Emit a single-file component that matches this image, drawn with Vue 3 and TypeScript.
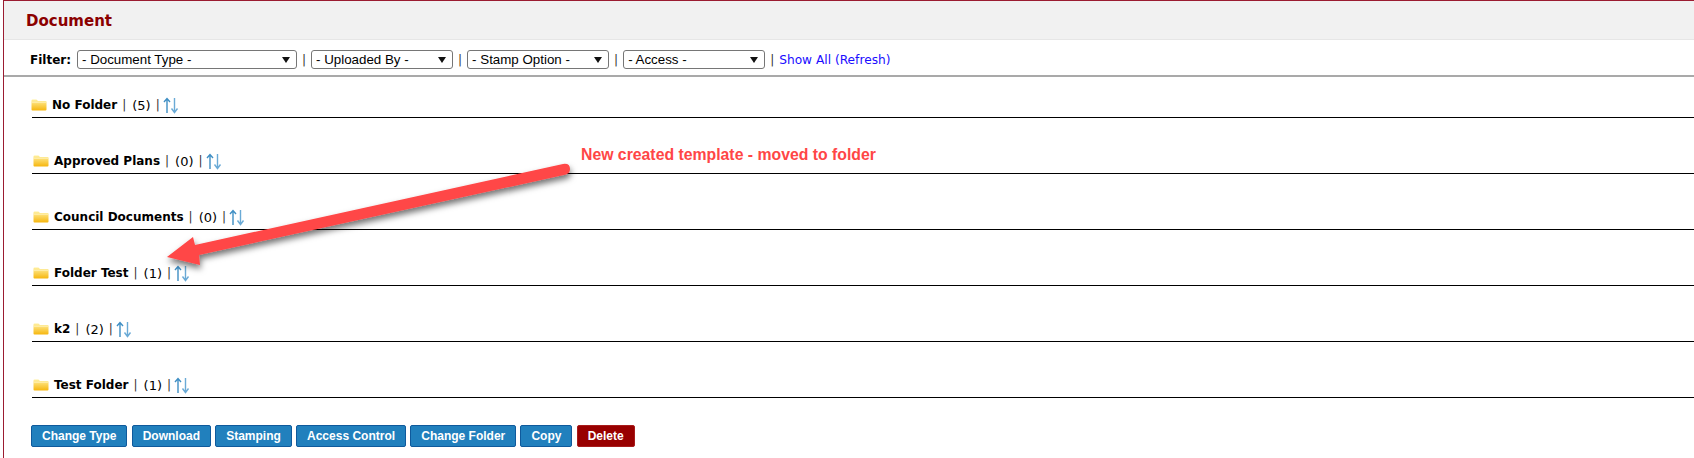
<script setup lang="ts">
const filters = [
  { label: '- Document Type -', cls: 'w-type' },
  { label: '- Uploaded By -', cls: 'w-user' },
  { label: '- Stamp Option -', cls: 'w-stamp' },
  { label: '- Access -', cls: 'w-access' },
]

const folders = [
  { name: 'No Folder', count: 5, first: true },
  { name: 'Approved Plans', count: 0 },
  { name: 'Council Documents', count: 0 },
  { name: 'Folder Test', count: 1 },
  { name: 'k2', count: 2 },
  { name: 'Test Folder', count: 1 },
]

const actions = ['Change Type', 'Download', 'Stamping', 'Access Control', 'Change Folder', 'Copy']
</script>

<template>
  <div class="page">
    <div class="head">Document</div>

    <div class="filter">
      <b class="filter-label">Filter:</b>
      <template v-for="f in filters" :key="f.label">
        <select :class="f.cls">
          <option>{{ f.label }}</option>
        </select>
        <span class="pipe">|</span>
      </template>
      <a class="show-all">Show All (Refresh)</a>
    </div>

    <div class="folders">
      <div v-for="f in folders" :key="f.name" class="folder" :class="{ first: f.first }">
        <svg class="folder-icon" width="16" height="12" viewBox="0 0 16 12">
          <defs>
            <linearGradient id="fold" x1="0" y1="0" x2="0" y2="1">
              <stop offset="0" stop-color="#fff0a0" />
              <stop offset="1" stop-color="#f6b60e" />
            </linearGradient>
          </defs>
          <path d="M0.5 1.5 Q0.5 0.5 1.5 0.5 H5.5 L7 2 H14.5 Q15.5 2 15.5 3 V10.5 Q15.5 11.5 14.5 11.5 H1.5 Q0.5 11.5 0.5 10.5 Z" fill="url(#fold)" />
          <path d="M0.5 3.2 H15.5" stroke="#fff1b8" stroke-width="1" />
        </svg>
        <b class="folder-name">{{ f.name }}</b>
        <span class="pipe">|</span>
        <span class="count">({{ f.count }})</span>
        <span class="pipe tight">|</span>
        <svg class="sort" width="16" height="17" viewBox="0 0 16 17">
          <path d="M4 16 V2 M1 5 L4 1.5 L7 5" fill="none" stroke="#3f8fc4" stroke-width="1.4" />
          <path d="M11.5 1 V15 M8.5 11.5 L11.5 15.5 L14.5 11.5" fill="none" stroke="#6aaad6" stroke-width="1.4" />
        </svg>
      </div>
    </div>

    <div class="actions">
      <button v-for="a in actions" :key="a" class="btn">{{ a }}</button>
      <button class="btn danger">Delete</button>
    </div>

    <svg class="note-arrow" width="1694" height="458" viewBox="0 0 1694 458">
      <defs>
        <filter id="shade" x="-10%" y="-30%" width="120%" height="170%">
          <feDropShadow dx="1" dy="4" stdDeviation="3" flood-color="#000" flood-opacity="0.55" />
        </filter>
      </defs>
      <path
        d="M563 164 Q570 163 570 169 Q570 173 566 174.5 L199 255 L200 265 L167 257 L193 237 L195 245 Z"
        fill="#ff4646"
        filter="url(#shade)"
      />
    </svg>
    <div class="note">New created template - moved to folder</div>
  </div>
</template>

<style>
html,
body {
  margin: 0;
  background: #fff;
}
</style>

<style scoped>
.page {
  position: relative;
  width: 1691px;
  height: 458px;
  margin-left: 3px;
  box-sizing: border-box;
  border-top: 1px solid #9b1c31;
  border-left: 1px solid #9b1c31;
  font-family: "DejaVu Sans", Verdana, sans-serif;
  font-size: 12px;
  color: #000;
  overflow: hidden;
}

.head {
  height: 38px;
  line-height: 40px;
  padding-left: 22px;
  background: #f1f1f1;
  border-bottom: 1px solid #e6e6e6;
  color: #8b0000;
  font-size: 15px;
  font-weight: 700;
}

.filter {
  display: flex;
  align-items: center;
  height: 31px;
  padding: 4px 0 0 26px;
  border-bottom: 2px solid #a9a9a9;
}

.filter-label {
  margin-right: 6px;
}

select {
  height: 19px;
  box-sizing: border-box;
  padding: 0 0 0 4px;
  border: 1px solid #767676;
  border-radius: 3px;
  appearance: none;
  background: #fff url("data:image/svg+xml,%3Csvg xmlns='http://www.w3.org/2000/svg' width='8' height='6'%3E%3Cpath d='M0 0H8L4 6Z' fill='%23111'/%3E%3C/svg%3E") no-repeat right 6px center;
  font-family: "Liberation Sans", Arial, sans-serif;
  font-size: 13.33px;
  color: #000;
}

.w-type { width: 220px; }
.w-user { width: 142px; }
.w-stamp { width: 142px; }
.w-access { width: 142px; }

.pipe {
  margin: 0 5px;
  color: #333;
}

.pipe.tight {
  margin: 0 1px 0 5px;
}

.show-all {
  color: #1a0dff;
  font-size: 12.2px;
}

.folders {
  padding-left: 28px;
}

.folder {
  display: flex;
  align-items: center;
  height: 24px;
  padding-top: 31px;
  border-bottom: 1px solid #000;
}

.folder.first {
  padding-top: 16px;
}

.folder-icon {
  margin: 0 5px 0 1px;
  flex: none;
}

.folder.first .folder-icon {
  margin-left: -1px;
}

.count {
  margin-left: 1px;
  font-size: 13px;
}

.sort {
  margin-left: 2px;
  flex: none;
}

.actions {
  display: flex;
  gap: 4.2px;
  padding: 27px 0 0 27px;
}

.btn {
  height: 22px;
  padding: 0 10px;
  border: 1px solid #0f5a9c;
  border-radius: 2px;
  background: #2180bd;
  color: #fff;
  font-family: "Liberation Sans", Arial, sans-serif;
  font-size: 12px;
  font-weight: 700;
}

.btn.danger {
  background: #980000;
  border-color: #a81c1c;
}

.note-arrow {
  position: absolute;
  left: -4px;
  top: -1px;
  pointer-events: none;
}

.note {
  position: absolute;
  left: 577px;
  top: 145px;
  font-family: "Liberation Sans", Arial, sans-serif;
  font-size: 15.8px;
  font-weight: 700;
  color: #ff4646;
  white-space: nowrap;
}
</style>
